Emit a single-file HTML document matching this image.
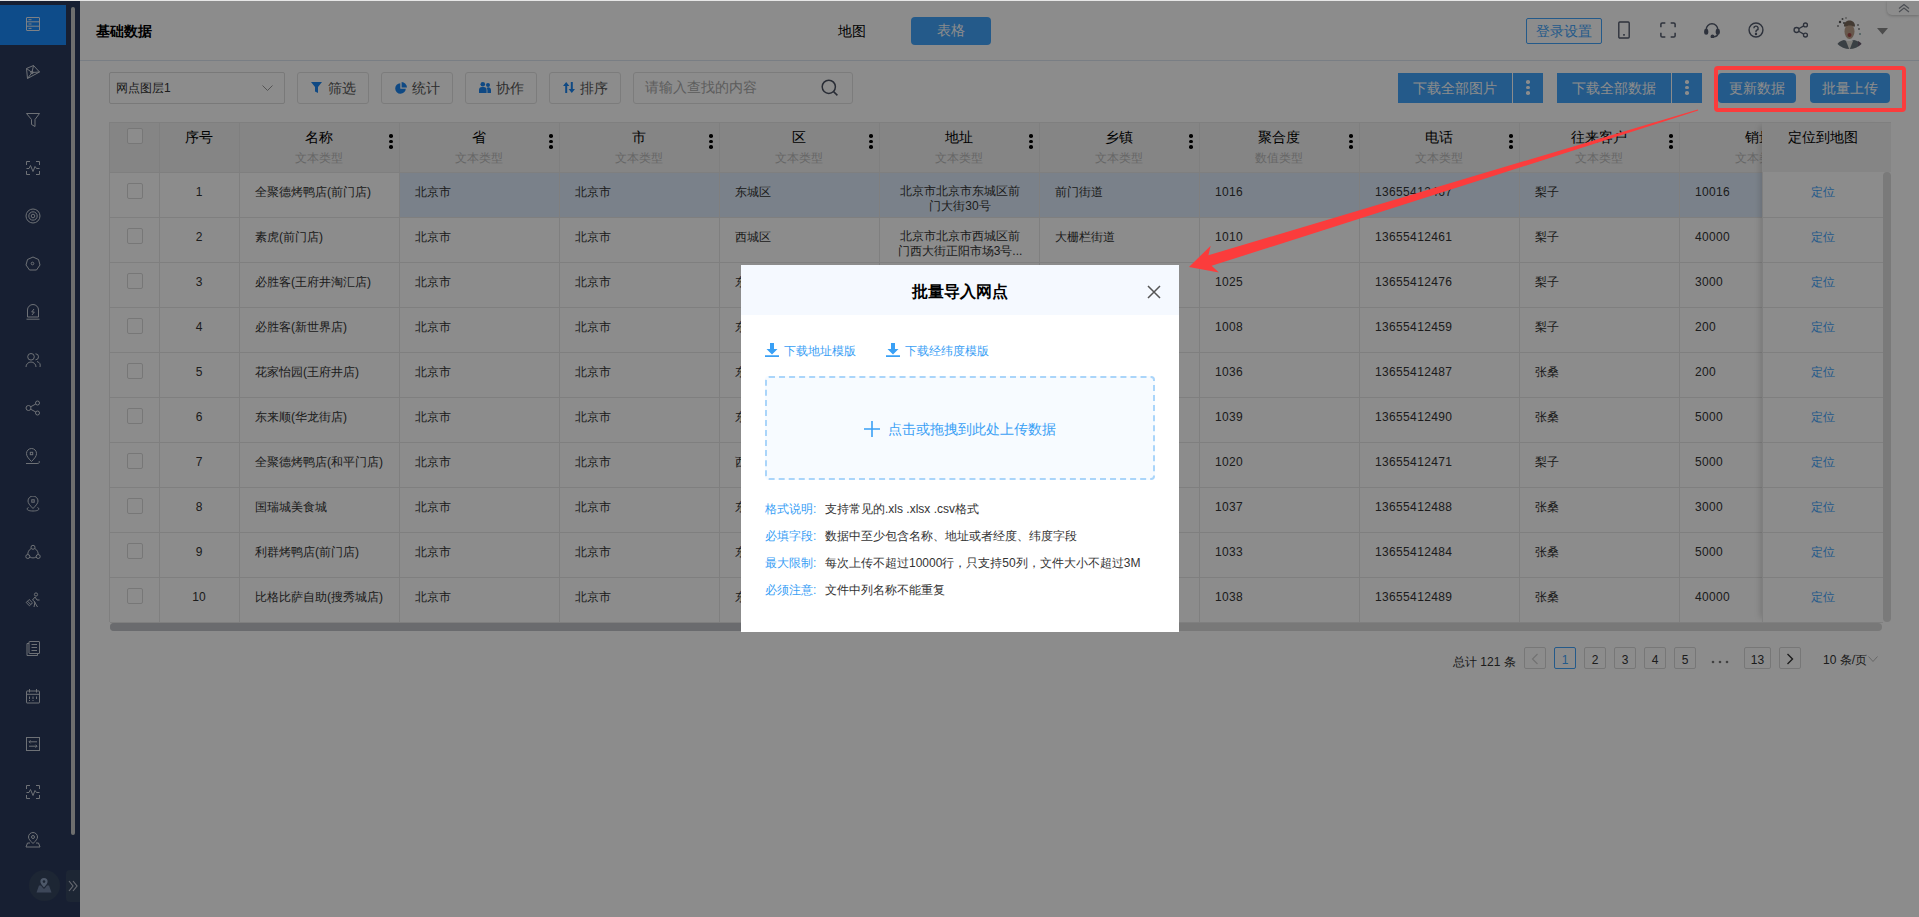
<!DOCTYPE html>
<html><head><meta charset="utf-8"><style>
*{box-sizing:border-box;margin:0;padding:0}
html,body{width:1919px;height:917px;overflow:hidden;background:#fff;font-family:"Liberation Sans", sans-serif;font-size:12px;color:#333}
.a{position:absolute}
#topline{left:0;top:0;width:1919px;height:1px;background:#e6e6e6;z-index:50}
#side{left:0;top:1px;width:80px;height:916px;background:#2a3a5b}
#side .act{position:absolute;left:0;top:4px;width:66px;height:40px;background:#1a8bfb}
#side .thumb{position:absolute;left:71px;top:6px;width:4px;height:828px;border-radius:2px;background:#c8c8c8}
#side svg{position:absolute}
#hdr{left:80px;top:1px;width:1839px;height:60px;border-bottom:1px solid #dde6f0;background:#fff}
.title{left:96px;top:23px;font-size:14px;font-weight:bold;color:#000;white-space:nowrap}
.btn{position:absolute;display:flex;align-items:center;justify-content:center;white-space:nowrap}
.tb{border:1px solid #e2e2e2;border-radius:3px;background:#fff;color:#333;font-size:13px;height:32px;top:72px}
.pb{background:#42a4fc;color:#fff;font-size:14px;height:30px;top:73px;padding-top:1px}
table{border-collapse:collapse}
.cell{position:absolute;display:flex;align-items:center;white-space:nowrap;font-size:12px;color:#333}
.vl{position:absolute;width:1px;background:#e8e8e8}
.hl{position:absolute;height:1px;background:#e8e8e8}
.kb{position:absolute;width:4px}
.kb i{display:block;width:3.6px;height:3.6px;border-radius:50%;background:#000;margin-bottom:2.1px}
.pg{position:absolute;top:647px;height:22px;border:1px solid #d9d9d9;background:#fff;font-size:12px;color:#333;display:flex;align-items:center;justify-content:center;border-radius:2px;padding-top:3px}
#mask{left:0;top:1px;width:1919px;height:916px;background:rgba(0,0,0,.45);z-index:10}
#modal{left:741px;top:265px;width:438px;height:367px;background:#fff;z-index:20}
#ann{left:0;top:0;z-index:40}
</style></head><body>
<div id="topline" class="a"></div>
<div id="side" class="a"><div class="act"></div><div class="thumb"></div>
<svg style="left:25px;top:15px" width="16" height="16" viewBox="0 0 16 16" fill="none" stroke="#e6ebf2" stroke-width="1"><rect x="1.5" y="1.5" width="13" height="13" rx="0.5"/><path d="M1.5 5.8h13M1.5 10.2h13M3.5 3.7h3M3.5 8h3M3.5 12.4h3"/></svg>
<svg style="left:25px;top:63px" width="16" height="16" viewBox="0 0 16 16" fill="none" stroke="#c9ced8" stroke-width="1"><path d="M1.5 4.5L8.5 1.5L14.5 8L2.5 14.5Z M1.5 4.5L7 8.5L14.5 8M7 8.5L8.5 1.5M7 8.5L2.5 14.5"/><circle cx="7" cy="8.5" r="1.3"/></svg>
<svg style="left:25px;top:111px" width="16" height="16" viewBox="0 0 16 16" fill="none" stroke="#c9ced8" stroke-width="1"><path d="M1.5 1.5h13L10 7.5v7L6.5 12.5V7.5Z"/></svg>
<svg style="left:25px;top:159px" width="16" height="16" viewBox="0 0 16 16" fill="none" stroke="#c9ced8" stroke-width="1"><path d="M1.5 5V1.5H5M11 1.5h3.5V5M14.5 11v3.5H11M5 14.5H1.5V11"/><path d="M1.5 8.5h2.5l1.5-3 2.5 6 2-5 1.5 2h3"/></svg>
<svg style="left:25px;top:207px" width="16" height="16" viewBox="0 0 16 16" fill="none" stroke="#c9ced8" stroke-width="1"><circle cx="8" cy="8" r="7"/><circle cx="8" cy="8" r="4.2"/><circle cx="8" cy="8" r="1.8"/></svg>
<svg style="left:25px;top:255px" width="16" height="16" viewBox="0 0 16 16" fill="none" stroke="#c9ced8" stroke-width="1"><path d="M8 1L13.5 3.5L15 9L11.5 14L4.5 14L1 9L2.5 3.5Z"/><circle cx="7.5" cy="7.5" r="1.3"/></svg>
<svg style="left:25px;top:303px" width="16" height="16" viewBox="0 0 16 16" fill="none" stroke="#c9ced8" stroke-width="1"><path d="M2.5 13V6a5.5 5.5 0 0 1 11 0v7Z M1.5 15.2h13 M9 5l-2.3 3h2.6l-2.3 3"/></svg>
<svg style="left:25px;top:351px" width="16" height="16" viewBox="0 0 16 16" fill="none" stroke="#c9ced8" stroke-width="1"><circle cx="6" cy="4.8" r="3.3"/><path d="M1 15a5 5 0 0 1 10 0 M10.5 1.8a3 3 0 0 1 0 6 M12 9.5a4.5 4.5 0 0 1 3 5.5"/></svg>
<svg style="left:25px;top:399px" width="16" height="16" viewBox="0 0 16 16" fill="none" stroke="#c9ced8" stroke-width="1"><circle cx="3.5" cy="8" r="2.5"/><circle cx="12.5" cy="3" r="2"/><circle cx="12.5" cy="13" r="2"/><path d="M5.6 6.8L10.8 4M5.6 9.2L10.8 12"/></svg>
<svg style="left:25px;top:447px" width="16" height="16" viewBox="0 0 16 16" fill="none" stroke="#c9ced8" stroke-width="1"><path d="M6.5 13.5C3 10 1.5 8 1.5 5.5a5 5 0 0 1 10 0c0 2.5-1.5 4.5-5 8Z"/><rect x="5.3" y="4.3" width="2.4" height="2.4"/><path d="M1 15.5h11c2.5 0 3-1.5 1.8-2.5"/></svg>
<svg style="left:25px;top:495px" width="16" height="16" viewBox="0 0 16 16" fill="none" stroke="#c9ced8" stroke-width="1"><path d="M8 12.5C4.5 9 3 7 3 5a5 5 0 0 1 10 0c0 2-1.5 4-5 7.5Z"/><rect x="6.8" y="3.8" width="2.4" height="2.4"/><path d="M3.5 11.5C1 12.5 1.5 15 8 15s7-2.5 4.5-3.5"/></svg>
<svg style="left:25px;top:543px" width="16" height="16" viewBox="0 0 16 16" fill="none" stroke="#c9ced8" stroke-width="1"><circle cx="8" cy="3.3" r="2"/><circle cx="2.8" cy="12.5" r="2"/><circle cx="13.2" cy="12.5" r="2"/><path d="M6.2 4.5C3.5 6 2.8 8.5 2.8 10.5 M9.8 4.5c2.7 1.5 3.4 4 3.4 6 M4.8 12.8c1.5 1.5 4.9 1.5 6.4 0"/></svg>
<svg style="left:25px;top:591px" width="16" height="16" viewBox="0 0 16 16" fill="none" stroke="#c9ced8" stroke-width="1"><circle cx="11" cy="2.5" r="1.6"/><path d="M10 5l-2.5 3 2.5 2-1 5 M10 5l2 3h2.5 M9.5 10l3 5 M1.2 10.5l3-3 3.3 3.3-3 3Z M2.5 9.2l3.3 3.3"/></svg>
<svg style="left:25px;top:639px" width="16" height="16" viewBox="0 0 16 16" fill="none" stroke="#c9ced8" stroke-width="1"><rect x="4" y="1.5" width="10.5" height="12" rx="0.5"/><path d="M4 3.5H2v12h10.5v-2 M6.5 4.5h5.5M6.5 7.5h5.5M6.5 10.5h5.5"/></svg>
<svg style="left:25px;top:687px" width="16" height="16" viewBox="0 0 16 16" fill="none" stroke="#c9ced8" stroke-width="1"><rect x="1.5" y="3" width="13" height="12" rx="0.5"/><path d="M1.5 6.3h13 M4.5 1v3.5 M11.5 1v3.5 M4.5 8.5v2.5M8 8.5v2.5M11.5 8.5v2.5 M4 12.5h1M7.5 12.5h1"/></svg>
<svg style="left:25px;top:735px" width="16" height="16" viewBox="0 0 16 16" fill="none" stroke="#c9ced8" stroke-width="1"><rect x="1.5" y="1.5" width="13" height="13"/><path d="M4 5.8h8 M4 10.2h8 M5.5 4.3L4 5.8l1.5 1.5 M10.5 8.7L12 10.2l-1.5 1.5"/></svg>
<svg style="left:25px;top:783px" width="16" height="16" viewBox="0 0 16 16" fill="none" stroke="#c9ced8" stroke-width="1"><path d="M1.5 5V1.5H5M11 1.5h3.5V5M14.5 11v3.5H11M5 14.5H1.5V11"/><path d="M1.5 8.5h2.5l1.5-3 2.5 6 2-5 1.5 2h3"/></svg>
<svg style="left:25px;top:831px" width="16" height="16" viewBox="0 0 16 16" fill="none" stroke="#c9ced8" stroke-width="1"><path d="M8 11.5C5 8.5 3.5 7 3.5 5a4.5 4.5 0 0 1 9 0c0 2-1.5 3.5-4.5 6.5Z"/><circle cx="8" cy="5" r="1.5"/><path d="M5 11H2.5l-1.5 4h14l-1.5-4H11"/></svg>
<div class="a" style="left:29px;top:869px;width:31px;height:31px;border-radius:50%;background:#36455f"></div>
<svg class="a" style="left:36px;top:877px" width="16" height="15" viewBox="0 0 16 15"><path d="M8 0a3.6 3.6 0 0 1 3.6 3.6C11.6 6 8 9.5 8 9.5S4.4 6 4.4 3.6A3.6 3.6 0 0 1 8 0Z" fill="#8da0bf"/><circle cx="8" cy="3.6" r="1.3" fill="#36455f"/><path d="M3 7.5L0.5 14.5h15L13 7.5l-2 0c-1 1.5-2 2.6-3 3.6-1-1-2-2.1-3-3.6Z" fill="#6f82a3"/></svg>
<div class="a" style="left:66px;top:869px;width:14px;height:32px;border-radius:4px 0 0 4px;background:#36455f"></div>
<svg class="a" style="left:68px;top:879px" width="10" height="12" viewBox="0 0 10 12" fill="none" stroke="#b8bfcc" stroke-width="1.2"><path d="M1 1l4 5-4 5M5 1l4 5-4 5"/></svg>
</div>
<div id="hdr" class="a"></div>
<div class="a title">基础数据</div>
<div class="a" style="left:838px;top:23px;font-size:14px;color:#000">地图</div>
<div class="btn" style="left:911px;top:17px;width:80px;height:28px;border-radius:4px;background:#42a4fc;color:#fff;font-size:14px">表格</div>
<svg class="a" style="left:1617px;top:21px" width="14" height="18" viewBox="0 0 14 18" fill="none" stroke="#545c6e" stroke-width="1.4"><rect x="1.8" y="1" width="10.4" height="16" rx="1"/><path d="M6.2 13.8h1.6" stroke-width="1.8"/></svg>
<svg class="a" style="left:1660px;top:22px" width="16" height="16" viewBox="0 0 18 18" fill="none" stroke="#545c6e" stroke-width="1.7"><path d="M1 6V2.5A1.5 1.5 0 0 1 2.5 1H6M12 1h3.5A1.5 1.5 0 0 1 17 2.5V6M17 12v3.5a1.5 1.5 0 0 1-1.5 1.5H12M6 17H2.5A1.5 1.5 0 0 1 1 15.5V12"/></svg>
<svg class="a" style="left:1704px;top:22px" width="16" height="16" viewBox="0 0 18 18" fill="none" stroke="#545c6e" stroke-width="1.7"><path d="M2.5 11V8.5a6.5 6.5 0 0 1 13 0V11"/><rect x="1" y="8.5" width="3" height="5" rx="1.5" fill="#545c6e"/><rect x="14" y="8.5" width="3" height="5" rx="1.5" fill="#545c6e"/><path d="M15.5 13c0 2.5-2 3.5-5 3.5"/><circle cx="9.5" cy="16.3" r="1.3" fill="#545c6e"/></svg>
<svg class="a" style="left:1748px;top:22px" width="16" height="16" viewBox="0 0 18 18" fill="none" stroke="#545c6e" stroke-width="1.6"><circle cx="9" cy="9" r="7.8"/><path d="M6.6 7a2.4 2.4 0 1 1 3.4 2.2c-.7.4-1 .8-1 1.6v.6"/><circle cx="9" cy="13.4" r=".6" fill="#545c6e"/></svg>
<svg class="a" style="left:1793px;top:22px" width="16" height="16" viewBox="0 0 18 18" fill="none" stroke="#545c6e" stroke-width="1.5"><circle cx="4" cy="9" r="2.8"/><circle cx="14" cy="3.3" r="2.2"/><circle cx="14" cy="14.7" r="2.2"/><path d="M6.4 7.6L12 4.4M6.4 10.4L12 13.6"/></svg>
<svg class="a" style="left:1832px;top:14px" width="35" height="36" viewBox="0 0 35 36"><defs><clipPath id="av"><circle cx="17.5" cy="18" r="17"/></clipPath><filter id="bl"><feGaussianBlur stdDeviation="0.6"/></filter></defs><g clip-path="url(#av)" filter="url(#bl)"><rect width="35" height="36" fill="#fff"/><path d="M3 36c1-6 4-9 9-10l5 2 5-2c5 1 9 4 10 10Z" fill="#6a747c"/><path d="M14 27l3.5 9 3.5-9Z" fill="#e6e3dc"/><path d="M26 27c3 1 5 4 6 9h-6Z" fill="#6b5d70"/><ellipse cx="17.5" cy="17.5" rx="5" ry="7.5" fill="#bca08a"/><path d="M12 12c0-4 3-5.5 5.5-5.5S23 8 23 12l-1 1c-1-2-7-2-9 0Z" fill="#7a6a5c"/><ellipse cx="17.5" cy="21" rx="2" ry="2" fill="#a44848"/><circle cx="8" cy="8" r="1.2" fill="#555"/><circle cx="10.5" cy="5" r="1" fill="#666"/><circle cx="6" cy="12" r="0.9" fill="#777"/><circle cx="12" cy="9" r="1" fill="#5a5a5a"/><circle cx="26" cy="11" r="1" fill="#888"/><circle cx="27" cy="15" r="0.9" fill="#777"/><circle cx="14" cy="4" r="0.8" fill="#777"/><circle cx="28" cy="20" r="1" fill="#8aa"/></g></svg>
<svg class="a" style="left:1877px;top:28px" width="11" height="8" viewBox="0 0 11 8"><path d="M0 0h11L5.5 6.5Z" fill="#8a8a8a"/></svg>
<div class="a" style="left:1887px;top:1px;width:32px;height:14px;border-radius:0 0 0 5px;background:#fff;box-shadow:0 1px 3px rgba(0,0,0,.22)"></div>
<svg class="a" style="left:1898px;top:3px" width="12" height="10" viewBox="0 0 12 10" fill="none" stroke="#8a8f98" stroke-width="1.2"><path d="M1 5.5l5-4 5 4M1 9l5-4 5 4"/></svg>
<div class="btn" style="left:1526px;top:18px;width:76px;height:26px;border:1px solid #42a4fc;border-radius:2px;color:#42a4fc;font-size:14px;padding-top:2px">登录设置</div>
<div class="a" style="left:109px;top:72px;width:176px;height:32px;border:1px solid #dcdcdc;border-radius:2px;background:#fff"></div>
<div class="a" style="left:116px;top:80px;font-size:12px;color:#333">网点图层1</div>
<div class="btn tb" style="left:297px;width:72px"></div>
<svg class="a" style="left:311px;top:82px" width="12" height="12" viewBox="0 0 12 12"><path d="M0 0h11L7 5v6L4 9.5V5Z" fill="#1d86f0"/></svg>
<div class="a" style="left:328px;top:80px;font-size:14px;color:#555">筛选</div>
<div class="btn tb" style="left:381px;width:72px"></div>
<svg class="a" style="left:395px;top:82px" width="12" height="12" viewBox="0 0 12 12"><path d="M5.3 1.2A5.3 5.3 0 1 0 10.8 6.7H5.3Z" fill="#1d86f0"/><path d="M6.6 0v5.4H12A5.6 5.6 0 0 0 6.6 0Z" fill="#1d86f0"/></svg>
<div class="a" style="left:412px;top:80px;font-size:14px;color:#555">统计</div>
<div class="btn tb" style="left:465px;width:72px"></div>
<svg class="a" style="left:479px;top:82px" width="12" height="12" viewBox="0 0 12 12"><circle cx="3.8" cy="2.3" r="2.3" fill="#1d86f0"/><circle cx="9" cy="3" r="2" fill="#1d86f0"/><path d="M0 11V8a3 3 0 0 1 3-3h1.6a3 3 0 0 1 3 3v3Z" fill="#1d86f0"/><path d="M8.4 11V8.3c0-1 -.3-1.8-.8-2.4a2.6 2.6 0 0 1 4.4 1.9V11Z" fill="#1d86f0"/></svg>
<div class="a" style="left:496px;top:80px;font-size:14px;color:#555">协作</div>
<div class="btn tb" style="left:549px;width:72px"></div>
<svg class="a" style="left:563px;top:82px" width="12" height="12" viewBox="0 0 12 12"><path d="M3.2 0L0 4h2.2v7h2V4h2.2Z M8.8 11L12 7H9.8V0h-2v7H5.6Z" fill="#1d86f0"/></svg>
<div class="a" style="left:580px;top:80px;font-size:14px;color:#555">排序</div>
<svg class="a" style="left:262px;top:85px" width="11" height="7" viewBox="0 0 11 7" fill="none" stroke="#999" stroke-width="1"><path d="M.5.5l5 5 5-5"/></svg>
<div class="a" style="left:633px;top:72px;width:220px;height:32px;border:1px solid #e2e2e2;border-radius:3px;background:#fff"></div>
<div class="a" style="left:645px;top:79px;font-size:14px;color:#aaa">请输入查找的内容</div>
<svg class="a" style="left:821px;top:79px" width="18" height="18" viewBox="0 0 18 18" fill="none" stroke="#4a5162" stroke-width="1.5"><circle cx="7.8" cy="7.8" r="6.6"/><path d="M12.6 12.6l3.8 3.8"/></svg>
<div class="btn pb" style="left:1398px;width:114px">下载全部图片</div>
<div class="btn pb" style="left:1513px;width:30px"></div>
<div class="kb" style="left:1526px;top:80px"><i style="background:#fff"></i><i style="background:#fff"></i><i style="background:#fff"></i></div>
<div class="btn pb" style="left:1557px;width:114px">下载全部数据</div>
<div class="btn pb" style="left:1672px;width:30px"></div>
<div class="kb" style="left:1685px;top:80px"><i style="background:#fff"></i><i style="background:#fff"></i><i style="background:#fff"></i></div>
<div class="btn pb" style="left:1718px;width:78px;border-radius:4px">更新数据</div>
<div class="btn pb" style="left:1810px;width:80px;border-radius:4px">批量上传</div>
<div class="a" style="left:110px;top:122px;width:1781px;height:50px;background:#f2f2f2"></div>
<div class="a" style="left:400px;top:172px;width:1362px;height:45px;background:#dfecfb"></div>
<div class="hl" style="left:110px;top:122px;width:1781px"></div>
<div class="hl" style="left:110px;top:172px;width:1772px"></div>
<div class="hl" style="left:110px;top:217px;width:1772px"></div>
<div class="hl" style="left:110px;top:262px;width:1772px"></div>
<div class="hl" style="left:110px;top:307px;width:1772px"></div>
<div class="hl" style="left:110px;top:352px;width:1772px"></div>
<div class="hl" style="left:110px;top:397px;width:1772px"></div>
<div class="hl" style="left:110px;top:442px;width:1772px"></div>
<div class="hl" style="left:110px;top:487px;width:1772px"></div>
<div class="hl" style="left:110px;top:532px;width:1772px"></div>
<div class="hl" style="left:110px;top:577px;width:1772px"></div>
<div class="hl" style="left:110px;top:622px;width:1772px"></div>
<div class="vl" style="left:109px;top:122px;height:500px"></div>
<div class="vl" style="left:159px;top:122px;height:500px"></div>
<div class="vl" style="left:239px;top:122px;height:500px"></div>
<div class="vl" style="left:399px;top:122px;height:500px"></div>
<div class="vl" style="left:559px;top:122px;height:500px"></div>
<div class="vl" style="left:719px;top:122px;height:500px"></div>
<div class="vl" style="left:879px;top:122px;height:500px"></div>
<div class="vl" style="left:1039px;top:122px;height:500px"></div>
<div class="vl" style="left:1199px;top:122px;height:500px"></div>
<div class="vl" style="left:1359px;top:122px;height:500px"></div>
<div class="vl" style="left:1519px;top:122px;height:500px"></div>
<div class="vl" style="left:1679px;top:122px;height:500px"></div>
<div class="a" style="left:159px;width:80px;top:129px;text-align:center;font-size:14px;font-weight:500;color:#000">序号</div>
<div class="a" style="left:239px;width:160px;top:129px;text-align:center;font-size:14px;font-weight:500;color:#000">名称</div>
<div class="a" style="left:239px;width:160px;top:150px;text-align:center;font-size:12px;color:#bbb">文本类型</div>
<div class="kb" style="left:389px;top:134px"><i></i><i></i><i></i></div>
<div class="a" style="left:399px;width:160px;top:129px;text-align:center;font-size:14px;font-weight:500;color:#000">省</div>
<div class="a" style="left:399px;width:160px;top:150px;text-align:center;font-size:12px;color:#bbb">文本类型</div>
<div class="kb" style="left:549px;top:134px"><i></i><i></i><i></i></div>
<div class="a" style="left:559px;width:160px;top:129px;text-align:center;font-size:14px;font-weight:500;color:#000">市</div>
<div class="a" style="left:559px;width:160px;top:150px;text-align:center;font-size:12px;color:#bbb">文本类型</div>
<div class="kb" style="left:709px;top:134px"><i></i><i></i><i></i></div>
<div class="a" style="left:719px;width:160px;top:129px;text-align:center;font-size:14px;font-weight:500;color:#000">区</div>
<div class="a" style="left:719px;width:160px;top:150px;text-align:center;font-size:12px;color:#bbb">文本类型</div>
<div class="kb" style="left:869px;top:134px"><i></i><i></i><i></i></div>
<div class="a" style="left:879px;width:160px;top:129px;text-align:center;font-size:14px;font-weight:500;color:#000">地址</div>
<div class="a" style="left:879px;width:160px;top:150px;text-align:center;font-size:12px;color:#bbb">文本类型</div>
<div class="kb" style="left:1029px;top:134px"><i></i><i></i><i></i></div>
<div class="a" style="left:1039px;width:160px;top:129px;text-align:center;font-size:14px;font-weight:500;color:#000">乡镇</div>
<div class="a" style="left:1039px;width:160px;top:150px;text-align:center;font-size:12px;color:#bbb">文本类型</div>
<div class="kb" style="left:1189px;top:134px"><i></i><i></i><i></i></div>
<div class="a" style="left:1199px;width:160px;top:129px;text-align:center;font-size:14px;font-weight:500;color:#000">聚合度</div>
<div class="a" style="left:1199px;width:160px;top:150px;text-align:center;font-size:12px;color:#bbb">数值类型</div>
<div class="kb" style="left:1349px;top:134px"><i></i><i></i><i></i></div>
<div class="a" style="left:1359px;width:160px;top:129px;text-align:center;font-size:14px;font-weight:500;color:#000">电话</div>
<div class="a" style="left:1359px;width:160px;top:150px;text-align:center;font-size:12px;color:#bbb">文本类型</div>
<div class="kb" style="left:1509px;top:134px"><i></i><i></i><i></i></div>
<div class="a" style="left:1519px;width:160px;top:129px;text-align:center;font-size:14px;font-weight:500;color:#000">往来客户</div>
<div class="a" style="left:1519px;width:160px;top:150px;text-align:center;font-size:12px;color:#bbb">文本类型</div>
<div class="kb" style="left:1669px;top:134px"><i></i><i></i><i></i></div>
<div class="a" style="left:1679px;width:160px;top:129px;text-align:center;font-size:14px;font-weight:500;color:#000">销量</div>
<div class="a" style="left:1679px;width:160px;top:150px;text-align:center;font-size:12px;color:#bbb">文本类型</div>
<div class="kb" style="left:1829px;top:134px"><i></i><i></i><i></i></div>
<div class="a" style="left:127px;top:128px;width:16px;height:16px;border:1px solid #d9d9d9;border-radius:2px;background:#fff"></div>
<div class="a" style="left:127px;top:183px;width:16px;height:16px;border:1px solid #d9d9d9;border-radius:2px;background:#fff"></div>
<div class="a" style="left:127px;top:228px;width:16px;height:16px;border:1px solid #d9d9d9;border-radius:2px;background:#fff"></div>
<div class="a" style="left:127px;top:273px;width:16px;height:16px;border:1px solid #d9d9d9;border-radius:2px;background:#fff"></div>
<div class="a" style="left:127px;top:318px;width:16px;height:16px;border:1px solid #d9d9d9;border-radius:2px;background:#fff"></div>
<div class="a" style="left:127px;top:363px;width:16px;height:16px;border:1px solid #d9d9d9;border-radius:2px;background:#fff"></div>
<div class="a" style="left:127px;top:408px;width:16px;height:16px;border:1px solid #d9d9d9;border-radius:2px;background:#fff"></div>
<div class="a" style="left:127px;top:453px;width:16px;height:16px;border:1px solid #d9d9d9;border-radius:2px;background:#fff"></div>
<div class="a" style="left:127px;top:498px;width:16px;height:16px;border:1px solid #d9d9d9;border-radius:2px;background:#fff"></div>
<div class="a" style="left:127px;top:543px;width:16px;height:16px;border:1px solid #d9d9d9;border-radius:2px;background:#fff"></div>
<div class="a" style="left:127px;top:588px;width:16px;height:16px;border:1px solid #d9d9d9;border-radius:2px;background:#fff"></div>
<div class="a" style="left:159px;width:80px;top:185px;text-align:center">1</div>
<div class="a" style="left:255px;top:184px;white-space:nowrap;">全聚德烤鸭店(前门店)</div>
<div class="a" style="left:415px;top:184px;white-space:nowrap;">北京市</div>
<div class="a" style="left:575px;top:184px;white-space:nowrap;">北京市</div>
<div class="a" style="left:735px;top:184px;white-space:nowrap;">东城区</div>
<div class="a" style="left:880px;width:160px;top:184px;text-align:center;line-height:15px">北京市北京市东城区前<br>门大街30号</div>
<div class="a" style="left:1055px;top:184px;white-space:nowrap;">前门街道</div>
<div class="a" style="left:1215px;top:185px;white-space:nowrap;letter-spacing:.35px;">1016</div>
<div class="a" style="left:1375px;top:185px;white-space:nowrap;letter-spacing:.35px;">13655412467</div>
<div class="a" style="left:1535px;top:184px;white-space:nowrap;">梨子</div>
<div class="a" style="left:1695px;top:185px;white-space:nowrap;letter-spacing:.35px;">10016</div>
<div class="a" style="left:159px;width:80px;top:230px;text-align:center">2</div>
<div class="a" style="left:255px;top:229px;white-space:nowrap;">素虎(前门店)</div>
<div class="a" style="left:415px;top:229px;white-space:nowrap;">北京市</div>
<div class="a" style="left:575px;top:229px;white-space:nowrap;">北京市</div>
<div class="a" style="left:735px;top:229px;white-space:nowrap;">西城区</div>
<div class="a" style="left:880px;width:160px;top:229px;text-align:center;line-height:15px">北京市北京市西城区前<br>门西大街正阳市场3号...</div>
<div class="a" style="left:1055px;top:229px;white-space:nowrap;">大栅栏街道</div>
<div class="a" style="left:1215px;top:230px;white-space:nowrap;letter-spacing:.35px;">1010</div>
<div class="a" style="left:1375px;top:230px;white-space:nowrap;letter-spacing:.35px;">13655412461</div>
<div class="a" style="left:1535px;top:229px;white-space:nowrap;">梨子</div>
<div class="a" style="left:1695px;top:230px;white-space:nowrap;letter-spacing:.35px;">40000</div>
<div class="a" style="left:159px;width:80px;top:275px;text-align:center">3</div>
<div class="a" style="left:255px;top:274px;white-space:nowrap;">必胜客(王府井淘汇店)</div>
<div class="a" style="left:415px;top:274px;white-space:nowrap;">北京市</div>
<div class="a" style="left:575px;top:274px;white-space:nowrap;">北京市</div>
<div class="a" style="left:735px;top:274px;white-space:nowrap;">东城区</div>
<div class="a" style="left:1055px;top:274px;white-space:nowrap;"></div>
<div class="a" style="left:1215px;top:275px;white-space:nowrap;letter-spacing:.35px;">1025</div>
<div class="a" style="left:1375px;top:275px;white-space:nowrap;letter-spacing:.35px;">13655412476</div>
<div class="a" style="left:1535px;top:274px;white-space:nowrap;">梨子</div>
<div class="a" style="left:1695px;top:275px;white-space:nowrap;letter-spacing:.35px;">3000</div>
<div class="a" style="left:159px;width:80px;top:320px;text-align:center">4</div>
<div class="a" style="left:255px;top:319px;white-space:nowrap;">必胜客(新世界店)</div>
<div class="a" style="left:415px;top:319px;white-space:nowrap;">北京市</div>
<div class="a" style="left:575px;top:319px;white-space:nowrap;">北京市</div>
<div class="a" style="left:735px;top:319px;white-space:nowrap;">东城区</div>
<div class="a" style="left:1055px;top:319px;white-space:nowrap;"></div>
<div class="a" style="left:1215px;top:320px;white-space:nowrap;letter-spacing:.35px;">1008</div>
<div class="a" style="left:1375px;top:320px;white-space:nowrap;letter-spacing:.35px;">13655412459</div>
<div class="a" style="left:1535px;top:319px;white-space:nowrap;">梨子</div>
<div class="a" style="left:1695px;top:320px;white-space:nowrap;letter-spacing:.35px;">200</div>
<div class="a" style="left:159px;width:80px;top:365px;text-align:center">5</div>
<div class="a" style="left:255px;top:364px;white-space:nowrap;">花家怡园(王府井店)</div>
<div class="a" style="left:415px;top:364px;white-space:nowrap;">北京市</div>
<div class="a" style="left:575px;top:364px;white-space:nowrap;">北京市</div>
<div class="a" style="left:735px;top:364px;white-space:nowrap;">东城区</div>
<div class="a" style="left:1055px;top:364px;white-space:nowrap;"></div>
<div class="a" style="left:1215px;top:365px;white-space:nowrap;letter-spacing:.35px;">1036</div>
<div class="a" style="left:1375px;top:365px;white-space:nowrap;letter-spacing:.35px;">13655412487</div>
<div class="a" style="left:1535px;top:364px;white-space:nowrap;">张桑</div>
<div class="a" style="left:1695px;top:365px;white-space:nowrap;letter-spacing:.35px;">200</div>
<div class="a" style="left:159px;width:80px;top:410px;text-align:center">6</div>
<div class="a" style="left:255px;top:409px;white-space:nowrap;">东来顺(华龙街店)</div>
<div class="a" style="left:415px;top:409px;white-space:nowrap;">北京市</div>
<div class="a" style="left:575px;top:409px;white-space:nowrap;">北京市</div>
<div class="a" style="left:735px;top:409px;white-space:nowrap;">东城区</div>
<div class="a" style="left:1055px;top:409px;white-space:nowrap;"></div>
<div class="a" style="left:1215px;top:410px;white-space:nowrap;letter-spacing:.35px;">1039</div>
<div class="a" style="left:1375px;top:410px;white-space:nowrap;letter-spacing:.35px;">13655412490</div>
<div class="a" style="left:1535px;top:409px;white-space:nowrap;">张桑</div>
<div class="a" style="left:1695px;top:410px;white-space:nowrap;letter-spacing:.35px;">5000</div>
<div class="a" style="left:159px;width:80px;top:455px;text-align:center">7</div>
<div class="a" style="left:255px;top:454px;white-space:nowrap;">全聚德烤鸭店(和平门店)</div>
<div class="a" style="left:415px;top:454px;white-space:nowrap;">北京市</div>
<div class="a" style="left:575px;top:454px;white-space:nowrap;">北京市</div>
<div class="a" style="left:735px;top:454px;white-space:nowrap;">西城区</div>
<div class="a" style="left:1055px;top:454px;white-space:nowrap;"></div>
<div class="a" style="left:1215px;top:455px;white-space:nowrap;letter-spacing:.35px;">1020</div>
<div class="a" style="left:1375px;top:455px;white-space:nowrap;letter-spacing:.35px;">13655412471</div>
<div class="a" style="left:1535px;top:454px;white-space:nowrap;">梨子</div>
<div class="a" style="left:1695px;top:455px;white-space:nowrap;letter-spacing:.35px;">5000</div>
<div class="a" style="left:159px;width:80px;top:500px;text-align:center">8</div>
<div class="a" style="left:255px;top:499px;white-space:nowrap;">国瑞城美食城</div>
<div class="a" style="left:415px;top:499px;white-space:nowrap;">北京市</div>
<div class="a" style="left:575px;top:499px;white-space:nowrap;">北京市</div>
<div class="a" style="left:735px;top:499px;white-space:nowrap;">东城区</div>
<div class="a" style="left:1055px;top:499px;white-space:nowrap;"></div>
<div class="a" style="left:1215px;top:500px;white-space:nowrap;letter-spacing:.35px;">1037</div>
<div class="a" style="left:1375px;top:500px;white-space:nowrap;letter-spacing:.35px;">13655412488</div>
<div class="a" style="left:1535px;top:499px;white-space:nowrap;">张桑</div>
<div class="a" style="left:1695px;top:500px;white-space:nowrap;letter-spacing:.35px;">3000</div>
<div class="a" style="left:159px;width:80px;top:545px;text-align:center">9</div>
<div class="a" style="left:255px;top:544px;white-space:nowrap;">利群烤鸭店(前门店)</div>
<div class="a" style="left:415px;top:544px;white-space:nowrap;">北京市</div>
<div class="a" style="left:575px;top:544px;white-space:nowrap;">北京市</div>
<div class="a" style="left:735px;top:544px;white-space:nowrap;">东城区</div>
<div class="a" style="left:1055px;top:544px;white-space:nowrap;"></div>
<div class="a" style="left:1215px;top:545px;white-space:nowrap;letter-spacing:.35px;">1033</div>
<div class="a" style="left:1375px;top:545px;white-space:nowrap;letter-spacing:.35px;">13655412484</div>
<div class="a" style="left:1535px;top:544px;white-space:nowrap;">张桑</div>
<div class="a" style="left:1695px;top:545px;white-space:nowrap;letter-spacing:.35px;">5000</div>
<div class="a" style="left:159px;width:80px;top:590px;text-align:center">10</div>
<div class="a" style="left:255px;top:589px;white-space:nowrap;">比格比萨自助(搜秀城店)</div>
<div class="a" style="left:415px;top:589px;white-space:nowrap;">北京市</div>
<div class="a" style="left:575px;top:589px;white-space:nowrap;">北京市</div>
<div class="a" style="left:735px;top:589px;white-space:nowrap;">东城区</div>
<div class="a" style="left:1055px;top:589px;white-space:nowrap;"></div>
<div class="a" style="left:1215px;top:590px;white-space:nowrap;letter-spacing:.35px;">1038</div>
<div class="a" style="left:1375px;top:590px;white-space:nowrap;letter-spacing:.35px;">13655412489</div>
<div class="a" style="left:1535px;top:589px;white-space:nowrap;">张桑</div>
<div class="a" style="left:1695px;top:590px;white-space:nowrap;letter-spacing:.35px;">40000</div>
<div class="a" style="left:1762px;top:122px;width:121px;height:500px;background:#fff;border-left:1px solid #e8e8e8;box-shadow:-6px 0 6px -4px rgba(0,0,0,.15)"></div>
<div class="a" style="left:1762px;top:122px;width:129px;height:50px;background:#f2f2f2;border-top:1px solid #e8e8e8"></div>
<div class="a" style="left:1762px;width:121px;top:129px;text-align:center;font-size:14px;font-weight:500;color:#000">定位到地图</div>
<div class="hl" style="left:1762px;top:217px;width:121px"></div>
<div class="a" style="left:1762px;width:121px;top:184px;text-align:center;color:#42a4fc">定位</div>
<div class="hl" style="left:1762px;top:262px;width:121px"></div>
<div class="a" style="left:1762px;width:121px;top:229px;text-align:center;color:#42a4fc">定位</div>
<div class="hl" style="left:1762px;top:307px;width:121px"></div>
<div class="a" style="left:1762px;width:121px;top:274px;text-align:center;color:#42a4fc">定位</div>
<div class="hl" style="left:1762px;top:352px;width:121px"></div>
<div class="a" style="left:1762px;width:121px;top:319px;text-align:center;color:#42a4fc">定位</div>
<div class="hl" style="left:1762px;top:397px;width:121px"></div>
<div class="a" style="left:1762px;width:121px;top:364px;text-align:center;color:#42a4fc">定位</div>
<div class="hl" style="left:1762px;top:442px;width:121px"></div>
<div class="a" style="left:1762px;width:121px;top:409px;text-align:center;color:#42a4fc">定位</div>
<div class="hl" style="left:1762px;top:487px;width:121px"></div>
<div class="a" style="left:1762px;width:121px;top:454px;text-align:center;color:#42a4fc">定位</div>
<div class="hl" style="left:1762px;top:532px;width:121px"></div>
<div class="a" style="left:1762px;width:121px;top:499px;text-align:center;color:#42a4fc">定位</div>
<div class="hl" style="left:1762px;top:577px;width:121px"></div>
<div class="a" style="left:1762px;width:121px;top:544px;text-align:center;color:#42a4fc">定位</div>
<div class="hl" style="left:1762px;top:622px;width:121px"></div>
<div class="a" style="left:1762px;width:121px;top:589px;text-align:center;color:#42a4fc">定位</div>
<div class="a" style="left:110px;top:623px;width:1772px;height:8px;border-radius:4px;background:#dadada"></div>
<div class="a" style="left:110px;top:623px;width:900px;height:8px;border-radius:4px;background:#c2c4c9"></div>
<div class="a" style="left:1883px;top:172px;width:8px;height:450px;border-radius:4px;background:#dedede"></div>
<div class="a" style="left:1453px;top:654px;font-size:12px;color:#333">总计 121 条</div>
<div class="pg" style="left:1524px;width:22px"></div><svg class="a" style="left:1531px;top:653px" width="8" height="12" viewBox="0 0 8 12" fill="none" stroke="#d0d0d0" stroke-width="1.2"><path d="M6.5 1L1.5 6l5 5"/></svg>
<div class="pg" style="left:1554px;width:22px;border-color:#42a4fc;color:#42a4fc">1</div>
<div class="pg" style="left:1584px;width:22px;">2</div>
<div class="pg" style="left:1614px;width:22px;">3</div>
<div class="pg" style="left:1644px;width:22px;">4</div>
<div class="pg" style="left:1674px;width:22px;">5</div>
<svg class="a" style="left:1711px;top:660px" width="18" height="4"><circle cx="2" cy="2" r="1.3" fill="#777"/><circle cx="9" cy="2" r="1.3" fill="#777"/><circle cx="16" cy="2" r="1.3" fill="#777"/></svg>
<div class="pg" style="left:1744px;width:27px">13</div>
<div class="pg" style="left:1779px;width:22px"></div><svg class="a" style="left:1786px;top:653px" width="8" height="12" viewBox="0 0 8 12" fill="none" stroke="#333" stroke-width="1.4"><path d="M1.5 1l5 5-5 5"/></svg>
<div class="a" style="left:1823px;top:652px;font-size:12px;color:#333">10 条/页</div><svg class="a" style="left:1868px;top:656px" width="10" height="7" viewBox="0 0 10 7" fill="none" stroke="#bbb" stroke-width="1"><path d="M.5.5l4.5 5 4.5-5"/></svg>
<div id="mask" class="a"></div>
<div id="modal" class="a">
<div class="a" style="left:0;top:0;width:438px;height:50px;background:#f5f9ff"></div>
<div class="a" style="left:0;top:17px;width:438px;text-align:center;font-size:16px;font-weight:bold;color:#000">批量导入网点</div>
<svg class="a" style="left:24px;top:78px" width="14" height="14" viewBox="0 0 14 14"><path d="M5 0h4v6h3.5L7 11.5 1.5 6H5Z M0 12.3h14v1.7H0Z" fill="#3aa0f5"/></svg>
<svg class="a" style="left:145px;top:78px" width="14" height="14" viewBox="0 0 14 14"><path d="M5 0h4v6h3.5L7 11.5 1.5 6H5Z M0 12.3h14v1.7H0Z" fill="#3aa0f5"/></svg>
<svg class="a" style="left:406px;top:20px" width="14" height="14" viewBox="0 0 14 14" fill="none" stroke="#555" stroke-width="1.5"><path d="M1 1l12 12M13 1L1 13"/></svg>
<div class="a" style="left:43px;top:78px;font-size:12px;color:#3aa0f5">下载地址模版</div>
<div class="a" style="left:164px;top:78px;font-size:12px;color:#3aa0f5">下载经纬度模版</div>
<div class="a" style="left:24px;top:111px;width:390px;height:104px;border:2px dashed #aad5fa;border-radius:4px;background:#f7fbff"></div>
<div class="a" style="left:147px;top:156px;font-size:14px;color:#3aa0f5">点击或拖拽到此处上传数据</div>
<svg class="a" style="left:123px;top:156px" width="16" height="16" viewBox="0 0 16 16" fill="none" stroke="#3aa0f5" stroke-width="1.6"><path d="M8 0v16M0 8h16"/></svg>
<div class="a" style="left:24px;top:236px;font-size:12px;color:#3aa0f5">格式说明:</div>
<div class="a" style="left:84px;top:236px;font-size:12px;color:#333;white-space:nowrap">支持常见的.xls .xlsx .csv格式</div>
<div class="a" style="left:24px;top:263px;font-size:12px;color:#3aa0f5">必填字段:</div>
<div class="a" style="left:84px;top:263px;font-size:12px;color:#333;white-space:nowrap">数据中至少包含名称、地址或者经度、纬度字段</div>
<div class="a" style="left:24px;top:290px;font-size:12px;color:#3aa0f5">最大限制:</div>
<div class="a" style="left:84px;top:290px;font-size:12px;color:#333;white-space:nowrap">每次上传不超过10000行，只支持50列，文件大小不超过3M</div>
<div class="a" style="left:24px;top:317px;font-size:12px;color:#3aa0f5">必须注意:</div>
<div class="a" style="left:84px;top:317px;font-size:12px;color:#333;white-space:nowrap">文件中列名称不能重复</div>
</div>
<div class="a" style="left:1714px;top:66px;width:192px;height:46px;border:4px solid #fb3c3c;border-radius:4px;z-index:40"></div>
<svg class="a" style="left:0;top:0;z-index:45" width="1919" height="917"><polygon points="1189.0,267.0 1210.7,245.7 1208.4,255.3 1697.8,109.4 1698.2,110.6 1211.6,265.8 1218.9,272.4" fill="#fb3c3c"/></svg>
</body></html>
